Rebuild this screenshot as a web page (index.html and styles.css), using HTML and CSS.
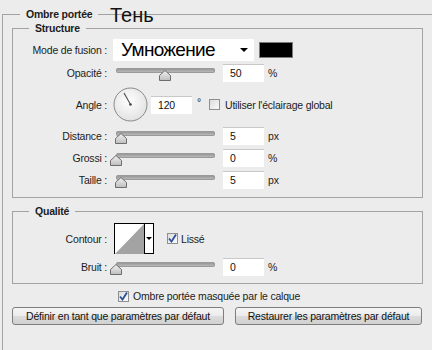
FILE: index.html
```html
<!doctype html>
<html>
<head>
<meta charset="utf-8">
<title>Ombre portée</title>
<link rel="stylesheet" href="styles.css">
</head>
<body>
<div class="outer">
	<div class="outer-title">Ombre portée</div>
	<div class="note">Тень</div>

	<div class="group group-structure">
		<div class="group-title">Structure</div>

		<div class="row row-mode">
			<span class="label">Mode de fusion :</span>
			<div class="select">
				<span class="select-text">Умножение</span>
				<span class="arrow"></span>
			</div>
			<span class="swatch"></span>
		</div>

		<div class="row row-opacity">
			<span class="label">Opacité :</span>
			<div class="slider">
				<span class="track"></span>
				<svg class="thumb" style="left:43px" width="12" height="11" viewBox="0 0 12 11"><defs><linearGradient id="tg" x1="0" y1="0" x2="0" y2="1"><stop offset="0" stop-color="#f4f4f4"/><stop offset="1" stop-color="#bdbdbd"/></linearGradient></defs><polygon points="6,0.5 11.5,5.5 11.5,10.5 0.5,10.5 0.5,5.5" fill="url(#tg)" stroke="#6d6d6d"/></svg>
			</div>
			<span class="field">50</span>
			<span class="unit">%</span>
		</div>

		<div class="row row-angle">
			<span class="label">Angle :</span>
			<svg class="dial" width="35" height="35" viewBox="0 0 35 35"><defs><radialGradient id="dg" cx="0.45" cy="0.4" r="0.6"><stop offset="0" stop-color="#ffffff"/><stop offset="1" stop-color="#e2e2e2"/></radialGradient></defs><circle cx="17.5" cy="17.5" r="16.5" fill="url(#dg)" stroke="#8a8a8a"/><line x1="17.5" y1="17.5" x2="11" y2="6" stroke="#555" stroke-width="1.2"/><circle cx="17.5" cy="17.5" r="1.3" fill="#444"/></svg>
			<span class="field field-angle">120</span>
			<span class="deg">°</span>
			<span class="check"></span>
			<span class="check-text">Utiliser l'éclairage global</span>
		</div>

		<div class="row row-distance">
			<span class="label">Distance :</span>
			<div class="slider">
				<span class="track"></span>
				<svg class="thumb" style="left:-1px" width="12" height="11" viewBox="0 0 12 11"><polygon points="6,0.5 11.5,5.5 11.5,10.5 0.5,10.5 0.5,5.5" fill="url(#tg)" stroke="#6d6d6d"/></svg>
			</div>
			<span class="field">5</span>
			<span class="unit">px</span>
		</div>

		<div class="row row-small">
			<span class="label">Grossi :</span>
			<div class="slider">
				<span class="track"></span>
				<svg class="thumb" style="left:-6px" width="12" height="11" viewBox="0 0 12 11"><polygon points="6,0.5 11.5,5.5 11.5,10.5 0.5,10.5 0.5,5.5" fill="url(#tg)" stroke="#6d6d6d"/></svg>
			</div>
			<span class="field">0</span>
			<span class="unit">%</span>
		</div>

		<div class="row row-small">
			<span class="label">Taille :</span>
			<div class="slider">
				<span class="track"></span>
				<svg class="thumb" style="left:-1px" width="12" height="11" viewBox="0 0 12 11"><polygon points="6,0.5 11.5,5.5 11.5,10.5 0.5,10.5 0.5,5.5" fill="url(#tg)" stroke="#6d6d6d"/></svg>
			</div>
			<span class="field">5</span>
			<span class="unit">px</span>
		</div>
	</div>

	<div class="group group-quality">
		<div class="group-title">Qualité</div>

		<div class="row row-contour">
			<span class="label">Contour :</span>
			<div class="contour">
				<svg width="29" height="30" viewBox="0 0 29 30"><rect width="29" height="30" fill="#fff"/><polygon points="0,30 29,0 29,30" fill="#a3a3a3"/></svg>
				<span class="contour-drop"><span class="arrow arrow-small"></span></span>
			</div>
			<span class="check check-on"><svg width="9" height="9" viewBox="0 0 9 9"><path d="M1 4.5 L3.5 7.5 L8 0.5" fill="none" stroke="#2a4f9e" stroke-width="1.8"/></svg></span>
			<span class="check-text">Lissé</span>
		</div>

		<div class="row row-noise">
			<span class="label">Bruit :</span>
			<div class="slider">
				<span class="track"></span>
				<svg class="thumb" style="left:-6px" width="12" height="11" viewBox="0 0 12 11"><polygon points="6,0.5 11.5,5.5 11.5,10.5 0.5,10.5 0.5,5.5" fill="url(#tg)" stroke="#6d6d6d"/></svg>
			</div>
			<span class="field">0</span>
			<span class="unit">%</span>
		</div>
	</div>

	<div class="row row-knockout">
		<span class="check check-on"><svg width="9" height="9" viewBox="0 0 9 9"><path d="M1 4.5 L3.5 7.5 L8 0.5" fill="none" stroke="#2a4f9e" stroke-width="1.8"/></svg></span>
		<span class="check-text">Ombre portée masquée par le calque</span>
	</div>

	<div class="buttons">
		<span class="btn btn-left">Définir en tant que paramètres par défaut</span>
		<span class="btn btn-right">Restaurer les paramètres par défaut</span>
	</div>
</div>
</body>
</html>
```

FILE: styles.css
```css
body { margin:0; padding:0; background:#ececec; overflow:hidden; font-family:"Liberation Sans", Arial, sans-serif; font-size:10.5px; letter-spacing:-0.2px; color:#1c1c1c;}

.outer { position:relative; margin:14px 0 0 2px; width:460px; height:400px; border:1px solid #a3a3a3; box-sizing:border-box;}
.outer-title { position:absolute; top:-8px; left:17px; padding:0 6px; background:#ececec; font-weight:bold; line-height:14px;}
.note { position:absolute; top:-11px; left:107px; font-family:Arial, "Liberation Sans", sans-serif; font-size:20px; letter-spacing:0; line-height:22px; color:#111;}

.group { position:relative; width:411px; margin-left:9px; border:1px solid #a3a3a3; box-sizing:border-box;}
.group-title { position:absolute; top:-8px; left:16px; padding:0 6px; background:#ececec; font-weight:bold; line-height:14px;}
.group-structure { margin-top:13px; height:170px; padding-top:10px;}
.group-quality { margin-top:13px; height:73px; padding-top:11px;}

.row { display:flex; align-items:center; height:18px;}
.label { width:100px; padding-right:6px; text-align:right; box-sizing:border-box; flex:none; white-space:nowrap;}

.row-mode { height:22px;}
.row-opacity { margin-top:3px;}
.row-angle { margin-top:5px; height:35px;}
.row-distance { margin-top:5px;}
.row-small { margin-top:4px;}
.row-contour { height:31px;}
.row-noise { margin-top:4px;}

.select { display:flex; align-items:center; width:141px; height:22px; background:#fff; box-sizing:border-box;}
.select-text { flex:1; padding-left:8px; font-family:Arial, "Liberation Sans", sans-serif; font-size:19px; letter-spacing:-0.7px; line-height:22px; color:#000;}
.arrow { width:0; height:0; border-left:4px solid transparent; border-right:4px solid transparent; border-top:4px solid #000; margin-right:6px;}
.arrow-small { border-left-width:3px; border-right-width:3px; border-top-width:3px; margin:0;}
.swatch { width:34px; height:16px; margin-left:5px; background:#000; border:1px solid #7b7b7b; box-sizing:border-box;}

.slider { position:relative; width:99px; height:18px; margin-left:3px; flex:none;}
.track { position:absolute; left:0; right:0; top:4px; height:5px; border-radius:3px; background:linear-gradient(#8c8c8c, #c4c4c4); box-shadow:inset 0 0 0 1px #9a9a9a;}
.thumb { position:absolute; top:6px;}

.field { width:41px; height:18px; margin-left:8px; padding-left:7px; box-sizing:border-box; background:#fff; border-top:1px solid #c8c8c8; line-height:17px; color:#111; flex:none;}
.unit { margin-left:4px;}

.dial { flex:none;}
.field-angle { margin-left:3px;}
.deg { margin-left:5px; margin-top:-6px;}
.check { display:flex; align-items:center; justify-content:center; width:11px; height:11px; margin-left:8px; border:1px solid #8e8f8f; box-sizing:border-box; background:linear-gradient(135deg, #dcdcdc, #fbfbfb); flex:none;}
.check-text { margin-left:5px; white-space:nowrap;}

.contour { display:flex; width:40px; height:31px; margin-left:1px; border:1px solid #000; box-sizing:border-box; background:#fff;}
.contour svg { display:block;}
.contour-drop { display:flex; align-items:center; justify-content:center; flex:1; border-left:1px solid #000; background:#fff;}
.row-contour .check { margin-left:13px;}
.row-contour .check-text { margin-left:3px;}

.row-knockout { margin:6px 0 0 115px; height:12px;}
.row-knockout .check { margin-left:0;}
.row-knockout .check-text { margin-left:4px;}

.buttons { display:flex; margin:5px 0 0 9px;}
.btn { display:block; height:18px; line-height:16px; text-align:center; box-sizing:border-box; border:1px solid #7e7e7e; border-radius:3px; background:linear-gradient(#f5f5f5 0%, #ebebeb 50%, #dcdcdc 51%, #d0d0d0 100%); color:#111; white-space:nowrap;}
.btn-left { width:212px;}
.btn-right { width:187px; margin-left:11px;}
```
